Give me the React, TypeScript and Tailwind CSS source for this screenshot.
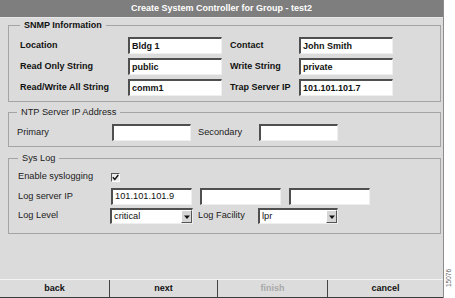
import React from 'react';

type BoxProps = { value?: string; bold?: boolean; className?: string };

// sunken white text field, old Java/Motif look
const TextBox = ({ value = '', bold = false, className = '' }: BoxProps) => (
  <div
    className={`h-[17px] bg-white border-t-2 border-l-2 border-t-[#4f4f4f] border-l-[#4f4f4f] border-b border-r border-b-[#efefef] border-r-[#efefef] pl-[2px] flex items-center text-[#111] leading-none ${
      bold ? 'font-bold text-[9px]' : 'text-[9.25px]'
    } ${className}`}
  >
    {value}
  </div>
);

const Dropdown = ({ value = '', className = '' }: BoxProps) => (
  <div
    className={`h-[16px] bg-white border-t-2 border-l-2 border-t-[#4f4f4f] border-l-[#4f4f4f] border-b border-r border-b-[#efefef] border-r-[#efefef] flex items-center text-[9.25px] text-[#111] leading-none ${className}`}
  >
    <span className="flex-1 pl-[2px]">{value}</span>
    <span className="w-[11px] h-full bg-[#d6d6d6] border-t border-l border-t-white border-l-white border-b border-r border-b-[#555] border-r-[#555] flex items-center justify-center">
      <svg width="6" height="4" viewBox="0 0 6 4">
        <path d="M0 0.5 L6 0.5 L3 4 Z" fill="#111" />
      </svg>
    </span>
  </div>
);

const Legend = ({ children, bold = false }: { children: React.ReactNode; bold?: boolean }) => (
  <legend
    className={`px-[4px] leading-[12px] text-[#111] ${bold ? 'font-bold text-[9px]' : 'text-[9.25px] text-[#222]'}`}
  >
    {children}
  </legend>
);

const BoldLabel = ({ children, className = '' }: { children: React.ReactNode; className?: string }) => (
  <span className={`font-bold text-[9px] text-[#111] ${className}`}>{children}</span>
);

const Label = ({ children, className = '' }: { children: React.ReactNode; className?: string }) => (
  <span className={`text-[9.25px] text-[#222] ${className}`}>{children}</span>
);

const buttons = [
  { label: 'back', cls: 'w-[109px]', disabled: false },
  { label: 'next', cls: 'w-[108px] border-l border-l-[#444]', disabled: false },
  { label: 'finish', cls: 'w-[110px] border-l border-l-[#444]', disabled: true },
  { label: 'cancel', cls: 'flex-1 border-l border-l-[#444]', disabled: false },
];

export default function App() {
  return (
    <div className="w-[455px] h-[298px] flex bg-white font-['Liberation_Sans',Arial,sans-serif] overflow-hidden">
      <div className="w-[444px] h-full flex flex-col bg-[#dbdbdb] border-r border-r-[#8c8c8c]">
        {/* title bar */}
        <div className="h-[18px] bg-[#7e7e7e] flex items-center justify-center text-white font-bold text-[9px] border-b border-b-[#e6e6e6]">
          Create System Controller for Group - test2
        </div>

        <div className="flex-1 flex flex-col pl-[8px] pr-[2px]">
          {/* SNMP */}
          <fieldset className="mt-[1px] border border-[#a4a4a4] pl-[11px] pt-[6px] pb-[5px]">
            <Legend bold>SNMP Information</Legend>
            <div className="grid grid-cols-[108px_94px_77px_94px] gap-y-[4px] items-center">
              <BoldLabel>Location</BoldLabel>
              <TextBox value="Bldg 1" bold />
              <BoldLabel className="pl-[8px]">Contact</BoldLabel>
              <TextBox value="John Smith" bold />

              <BoldLabel>Read Only String</BoldLabel>
              <TextBox value="public" bold />
              <BoldLabel className="pl-[8px]">Write String</BoldLabel>
              <TextBox value="private" bold />

              <BoldLabel>Read/Write All String</BoldLabel>
              <TextBox value="comm1" bold />
              <BoldLabel className="pl-[8px]">Trap Server IP</BoldLabel>
              <TextBox value="101.101.101.7" bold />
            </div>
          </fieldset>

          {/* NTP */}
          <fieldset className="mt-[4px] border border-[#a4a4a4] pl-[8px] pt-[6px] pb-[5px]">
            <Legend>NTP Server IP Address</Legend>
            <div className="flex items-center">
              <Label className="w-[95px]">Primary</Label>
              <TextBox className="w-[79px]" />
              <Label className="w-[68px] pl-[7px]">Secondary</Label>
              <TextBox className="w-[79px]" />
            </div>
          </fieldset>

          {/* Sys Log */}
          <fieldset className="mt-[5px] border border-[#a4a4a4] pl-[9px] pt-[5px] pb-[9px]">
            <Legend>Sys Log</Legend>
            <div className="flex flex-col gap-[3px]">
              <div className="h-[16px] flex items-center">
                <Label className="w-[93px]">Enable syslogging</Label>
                <span className="w-[9px] h-[9px] bg-[#ececec] border-t border-l border-t-[#555] border-l-[#555] border-b border-r border-b-white border-r-white flex items-center justify-center">
                  <svg width="7" height="7" viewBox="0 0 7 7">
                    <path d="M0.8 3.2 L2.8 5.4 L6.3 1" stroke="#111" strokeWidth="1.4" fill="none" />
                  </svg>
                </span>
              </div>
              <div className="flex items-center">
                <Label className="w-[93px]">Log server IP</Label>
                <TextBox value="101.101.101.9" className="w-[81px]" />
                <TextBox className="w-[81px] ml-[8px]" />
                <TextBox className="w-[81px] ml-[8px]" />
              </div>
              <div className="flex items-center">
                <Label className="w-[92px]">Log Level</Label>
                <Dropdown value="critical" className="w-[83px]" />
                <Label className="w-[65px] pl-[5px]">Log Facility</Label>
                <Dropdown value="lpr" className="w-[80px]" />
              </div>
            </div>
          </fieldset>

          <div className="flex-1" />
        </div>

        {/* wizard buttons */}
        <div className="h-[19px] flex border-t border-t-[#f4f4f4] border-b border-b-[#3c3c3c] bg-[#dcdcdc]">
          {buttons.map((b) => (
            <div
              key={b.label}
              className={`${b.cls} flex items-center justify-center font-bold text-[9px] ${
                b.disabled ? 'text-[#a9a9a9]' : 'text-[#111]'
              }`}
            >
              {b.label}
            </div>
          ))}
        </div>
      </div>

      {/* figure number */}
      <div className="flex-1 flex flex-col items-center justify-end pb-[11px]">
        <span className="[writing-mode:vertical-rl] rotate-180 text-[6.5px] leading-none text-[#666]">15076</span>
      </div>
    </div>
  );
}
